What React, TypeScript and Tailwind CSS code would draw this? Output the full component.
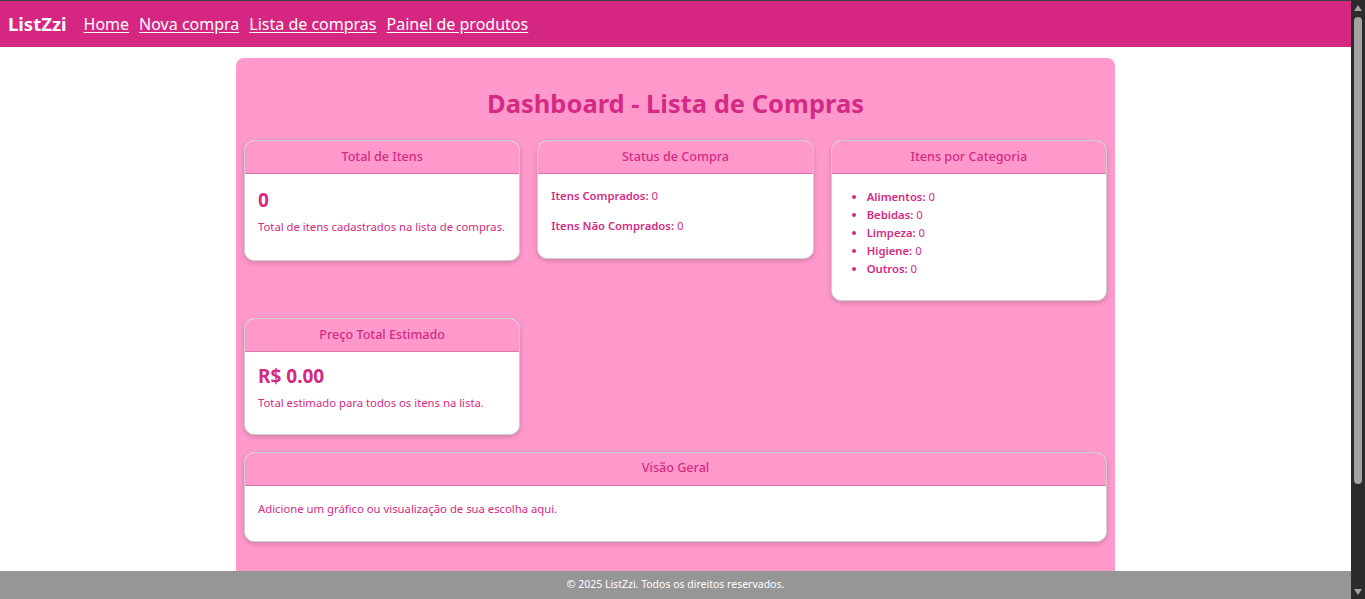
import type { ReactNode } from "react";

const font = { fontFamily: '"Noto Sans", "Open Sans", Arial, sans-serif' };

function Card({
  title,
  children,
  className = "",
  bodyClass = "pt-[14px] pb-[22px]",
}: {
  title: string;
  children: ReactNode;
  className?: string;
  bodyClass?: string;
}) {
  return (
    <div
      className={`overflow-hidden rounded-[10px] border border-[#cfcfcf] bg-white shadow-[0_2px_5px_rgba(0,0,0,0.18)] ${className}`}
    >
      <div className="flex h-[33px] items-center justify-center border-b border-[#d97aa8] bg-[#ff99cc] text-[12.6px] font-medium text-[#d42a84]">
        {title}
      </div>
      <div className={`px-[13px] text-[11.3px] text-[#d42a84] ${bodyClass}`}>{children}</div>
    </div>
  );
}

const categorias = ["Alimentos", "Bebidas", "Limpeza", "Higiene", "Outros"];

function FakeScrollbar() {
  return (
    <div className="fixed top-0 right-0 bottom-0 flex w-[14px] flex-col items-center bg-[#2b2b2b]">
      <div className="mt-[5px] h-0 w-0 border-x-[4px] border-b-[6px] border-x-transparent border-b-[#a3a3a3]" />
      <div className="mt-[6px] h-[467px] w-[8px] rounded-[4px] bg-[#a3a3a3]" />
      <div className="flex-1" />
      <div className="mb-[4px] h-0 w-0 border-x-[4px] border-t-[6px] border-x-transparent border-t-[#a3a3a3]" />
    </div>
  );
}

export default function App() {
  return (
    <div className="min-h-screen w-[calc(100%-14px)] bg-white pb-[40px]" style={font}>
      <nav className="flex h-[47px] items-center gap-[10px] border-t border-[#3c3c3c] bg-[#d52682] px-[8px] text-white">
        <span className="mr-[7px] text-[18.5px] font-bold">ListZzi</span>
        <a href="#" className="text-[16px] underline underline-offset-2">Home</a>
        <a href="#" className="text-[16px] underline underline-offset-2">Nova compra</a>
        <a href="#" className="text-[16px] underline underline-offset-2">Lista de compras</a>
        <a href="#" className="text-[16px] underline underline-offset-2">Painel de produtos</a>
      </nav>

      <main className="mx-auto mt-[11px] w-[879px] rounded-[8px] bg-[#ff99cc] px-[8px] pt-[28px] pb-[40px]">
        <h1 className="mb-[20px] text-center text-[25.5px] font-bold leading-[34px] text-[#d42a84]">
          Dashboard - Lista de Compras
        </h1>

        <div className="grid grid-cols-3 items-start gap-[17px]">
          <Card title="Total de Itens" bodyClass="pt-[13px] pb-[24px]">
            <p className="text-[19px] font-bold leading-[26px]">0</p>
            <p className="mt-[6px]">Total de itens cadastrados na lista de compras.</p>
          </Card>

          <Card title="Status de Compra" bodyClass="pt-[14px] pb-[23px]">
            <p>
              <strong className="font-semibold">Itens Comprados:</strong> 0
            </p>
            <p className="mt-[13px]">
              <strong className="font-semibold">Itens Não Comprados:</strong> 0
            </p>
          </Card>

          <Card title="Itens por Categoria">
            <ul className="list-disc pl-[22px] leading-[18px]">
              {categorias.map((c) => (
                <li key={c}>
                  <strong className="font-semibold">{c}:</strong> 0
                </li>
              ))}
            </ul>
          </Card>

          <Card title="Preço Total Estimado" bodyClass="pt-[11px] pb-[22px]">
            <p className="text-[19px] font-bold leading-[26px]">R$ 0.00</p>
            <p className="mt-[6px]">Total estimado para todos os itens na lista.</p>
          </Card>

          <Card title="Visão Geral" className="col-span-3" bodyClass="pt-[15px] pb-[23px]">
            <p>Adicione um gráfico ou visualização de sua escolha aqui.</p>
          </Card>
        </div>
      </main>

      <footer className="fixed bottom-0 left-0 right-[14px] flex h-[28px] items-center justify-center bg-[#969696] text-[10.5px] text-white">
        © 2025 ListZzi. Todos os direitos reservados.
      </footer>

      <FakeScrollbar />
    </div>
  );
}
